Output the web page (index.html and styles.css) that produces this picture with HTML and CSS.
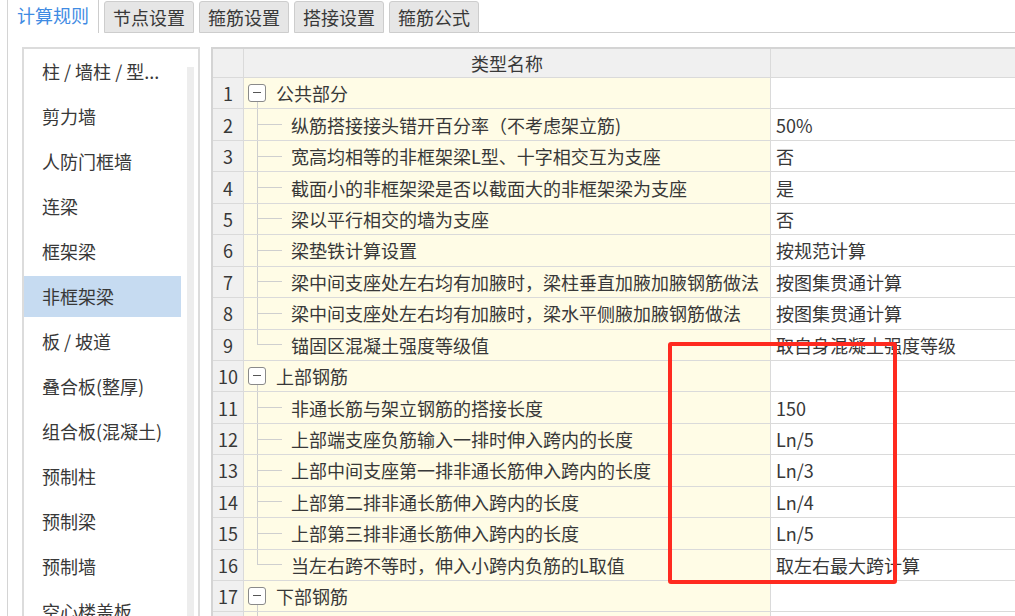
FILE: index.html
```html
<!DOCTYPE html>
<html lang="zh-CN">
<head>
    <meta charset="UTF-8">
    <title>计算规则</title>
    <link rel="stylesheet" href="styles.css">
</head>
<body>
    <div class="page">
        <div class="tabs">
            <div class="tab active">计算规则</div>
            <div class="tab">节点设置</div>
            <div class="tab">箍筋设置</div>
            <div class="tab">搭接设置</div>
            <div class="tab">箍筋公式</div>
            <div class="tab-fill"></div>
        </div>

        <div class="panel">
            <div class="type-list">
                <ul class="type-items">
                    <li>柱 / 墙柱 / 型...</li>
                    <li>剪力墙</li>
                    <li>人防门框墙</li>
                    <li>连梁</li>
                    <li>框架梁</li>
                    <li class="selected">非框架梁</li>
                    <li>板 / 坡道</li>
                    <li>叠合板(整厚)</li>
                    <li>组合板(混凝土)</li>
                    <li>预制柱</li>
                    <li>预制梁</li>
                    <li>预制墙</li>
                    <li>空心楼盖板</li>
                </ul>
                <div class="scroll"></div>
            </div>

            <div class="grid">
                <div class="row head">
                    <div class="c-no"></div>
                    <div class="c-name">类型名称</div>
                    <div class="c-val"></div>
                </div>

                <div class="row">
                    <div class="c-no">1</div>
                    <div class="c-name group"><span class="fold"></span>公共部分</div>
                    <div class="c-val"></div>
                </div>
                <div class="row">
                    <div class="c-no">2</div>
                    <div class="c-name child"><span class="branch"></span>纵筋搭接接头错开百分率（不考虑架立筋)</div>
                    <div class="c-val">50%</div>
                </div>
                <div class="row">
                    <div class="c-no">3</div>
                    <div class="c-name child"><span class="branch"></span>宽高均相等的非框架梁L型、十字相交互为支座</div>
                    <div class="c-val">否</div>
                </div>
                <div class="row">
                    <div class="c-no">4</div>
                    <div class="c-name child"><span class="branch"></span>截面小的非框架梁是否以截面大的非框架梁为支座</div>
                    <div class="c-val">是</div>
                </div>
                <div class="row">
                    <div class="c-no">5</div>
                    <div class="c-name child"><span class="branch"></span>梁以平行相交的墙为支座</div>
                    <div class="c-val">否</div>
                </div>
                <div class="row">
                    <div class="c-no">6</div>
                    <div class="c-name child"><span class="branch"></span>梁垫铁计算设置</div>
                    <div class="c-val">按规范计算</div>
                </div>
                <div class="row">
                    <div class="c-no">7</div>
                    <div class="c-name child"><span class="branch"></span>梁中间支座处左右均有加腋时，梁柱垂直加腋加腋钢筋做法</div>
                    <div class="c-val">按图集贯通计算</div>
                </div>
                <div class="row">
                    <div class="c-no">8</div>
                    <div class="c-name child"><span class="branch"></span>梁中间支座处左右均有加腋时，梁水平侧腋加腋钢筋做法</div>
                    <div class="c-val">按图集贯通计算</div>
                </div>
                <div class="row">
                    <div class="c-no">9</div>
                    <div class="c-name child last"><span class="branch"></span>锚固区混凝土强度等级值</div>
                    <div class="c-val">取自身混凝土强度等级</div>
                </div>

                <div class="row">
                    <div class="c-no">10</div>
                    <div class="c-name group"><span class="fold"></span>上部钢筋</div>
                    <div class="c-val"></div>
                </div>
                <div class="row">
                    <div class="c-no">11</div>
                    <div class="c-name child"><span class="branch"></span>非通长筋与架立钢筋的搭接长度</div>
                    <div class="c-val">150</div>
                </div>
                <div class="row">
                    <div class="c-no">12</div>
                    <div class="c-name child"><span class="branch"></span>上部端支座负筋输入一排时伸入跨内的长度</div>
                    <div class="c-val">Ln/5</div>
                </div>
                <div class="row">
                    <div class="c-no">13</div>
                    <div class="c-name child"><span class="branch"></span>上部中间支座第一排非通长筋伸入跨内的长度</div>
                    <div class="c-val">Ln/3</div>
                </div>
                <div class="row">
                    <div class="c-no">14</div>
                    <div class="c-name child"><span class="branch"></span>上部第二排非通长筋伸入跨内的长度</div>
                    <div class="c-val">Ln/4</div>
                </div>
                <div class="row">
                    <div class="c-no">15</div>
                    <div class="c-name child"><span class="branch"></span>上部第三排非通长筋伸入跨内的长度</div>
                    <div class="c-val">Ln/5</div>
                </div>
                <div class="row">
                    <div class="c-no">16</div>
                    <div class="c-name child last"><span class="branch"></span>当左右跨不等时，伸入小跨内负筋的L取值</div>
                    <div class="c-val">取左右最大跨计算</div>
                </div>

                <div class="row">
                    <div class="c-no">17</div>
                    <div class="c-name group"><span class="fold"></span>下部钢筋</div>
                    <div class="c-val"></div>
                </div>
                <div class="row">
                    <div class="c-no"></div>
                    <div class="c-name child"><span class="branch"></span></div>
                    <div class="c-val"></div>
                </div>
            </div>
        </div>

        <div class="mark"></div>
    </div>
</body>
</html>
```

FILE: styles.css
```css
* {
    margin: 0;
    padding: 0;
    box-sizing: border-box;
}

body {
    font-family: "Noto Sans CJK SC", "Noto Sans", sans-serif;
    font-size: 18px;
    color: #383838;
    background: #fff;
    overflow: hidden;
}

.page {
    position: relative;
    width: 1015px;
    height: 616px;
    overflow: hidden;
}

/* tab bar */
.tabs {
    display: flex;
    align-items: flex-end;
    height: 33px;
    padding-left: 7px;
}

.tab {
    height: 32px;
    line-height: 30px;
    padding: 0 8px;
    margin-right: 5px;
    background: #e6e6e6;
    border: 1px solid #cdcdcd;
    border-radius: 3px 3px 0 0;
    white-space: nowrap;
}

.tab.active {
    height: 33px;
    line-height: 31px;
    padding: 0 9px;
    background: #fff;
    color: #3f8be3;
    border: none;
    border-left: 1px solid #d4d4d4;
    border-right: 1px solid #cdcdcd;
    border-radius: 0;
}

.tab-fill {
    flex: 1;
    height: 100%;
    border-bottom: 1px solid #cdcdcd;
    margin-left: -5px;
}

/* body */
.panel {
    display: flex;
    gap: 11px;
    margin-left: 7px;
    padding: 14px 0 0 14px;
    height: 583px;
    border-left: 1px solid #d4d4d4;
}

.type-list {
    display: flex;
    flex-shrink: 0;
    width: 178px;
    height: 600px;
    border: 2px solid #dcdcdc;
    border-bottom: none;
}

.type-items {
    list-style: none;
    display: flex;
    flex-direction: column;
    width: 157px;
}

.type-items li {
    height: 41px;
    line-height: 41px;
    margin: 2px 0;
    padding-left: 18px;
    white-space: nowrap;
}

.type-items li.selected {
    background: #c6dbf1;
}

.scroll {
    width: 7px;
    height: 560px;
    margin: 18px 0 0 6px;
    background: #ededed;
}

/* grid */
.grid {
    flex-shrink: 0;
    width: 830px;
    border-top: 2px solid #d4d4d4;
    border-left: 2px solid #d4d4d4;
}

.row {
    display: grid;
    grid-template-columns: 31px 527px 1fr;
    height: 31.44px;
}

.row > div {
    display: flex;
    align-items: center;
    border-right: 1px solid #dadada;
    border-bottom: 1px solid #dadada;
    white-space: nowrap;
}

.row.head {
    height: 29px;
}

.row.head > div {
    background: #f0f0f0;
}

.row.head .c-name {
    justify-content: center;
}

.c-no {
    justify-content: center;
    background: #f0f0f0;
}

.c-name {
    background: #fffce6;
}

.c-val {
    padding-left: 5px;
    background: #fff;
}

.c-name.group {
    padding-left: 4px;
    background-image: linear-gradient(#cfcfcf, #cfcfcf);
    background-repeat: no-repeat;
    background-size: 1px 50%;
    background-position: 13px 100%;
}

.fold {
    position: relative;
    width: 18px;
    height: 18px;
    margin-right: 10px;
    border: 1px solid #8a8a8a;
    border-radius: 3px;
    background: #fff;
}

.fold::after {
    content: "";
    position: absolute;
    left: 4px;
    right: 4px;
    top: 7px;
    height: 1px;
    background: #555;
}

.c-name.child {
    padding-left: 13px;
    background-image: linear-gradient(#cfcfcf, #cfcfcf);
    background-repeat: no-repeat;
    background-size: 1px 100%;
    background-position: 13px 0;
}

.c-name.child.last {
    background-size: 1px 50%;
}

.branch {
    width: 25px;
    height: 1px;
    margin-right: 9px;
    background: #cfcfcf;
}

/* highlight drawn over the table */
.mark {
    position: absolute;
    left: 668px;
    top: 342px;
    width: 229px;
    height: 242px;
    border: 4px solid #ff2a1f;
    border-radius: 3px;
}
```
